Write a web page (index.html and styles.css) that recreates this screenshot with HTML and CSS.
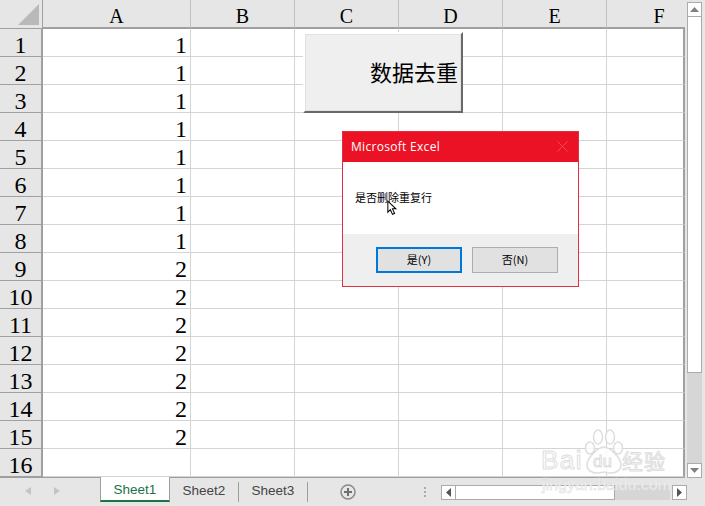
FILE: index.html
```html
<!DOCTYPE html>
<html lang="zh">
<head>
    <meta charset="UTF-8">
    <title>Microsoft Excel</title>
    <link rel="stylesheet" href="styles.css">
</head>
<body>
    <div class="app">
        <div class="top">
            <div class="sheet">
                <div class="colheads">
                    <div class="corner"><svg width="42" height="28"><polygon points="39,4 39,25 18,25" fill="#b9b9b9"/></svg></div>
                    <div class="colhead w-a">A</div>
                    <div class="colhead">B</div>
                    <div class="colhead">C</div>
                    <div class="colhead">D</div>
                    <div class="colhead">E</div>
                    <div class="colhead w-f">F</div>
                </div>
                <div class="row"><div class="rowhead">1</div><div class="cell w-a">1</div><div class="cell"></div><div class="cell"></div><div class="cell"></div><div class="cell"></div><div class="cell w-f"></div></div>
                <div class="row"><div class="rowhead">2</div><div class="cell w-a">1</div><div class="cell"></div><div class="cell"></div><div class="cell"></div><div class="cell"></div><div class="cell w-f"></div></div>
                <div class="row"><div class="rowhead">3</div><div class="cell w-a">1</div><div class="cell"></div><div class="cell"></div><div class="cell"></div><div class="cell"></div><div class="cell w-f"></div></div>
                <div class="row"><div class="rowhead">4</div><div class="cell w-a">1</div><div class="cell"></div><div class="cell"></div><div class="cell"></div><div class="cell"></div><div class="cell w-f"></div></div>
                <div class="row"><div class="rowhead">5</div><div class="cell w-a">1</div><div class="cell"></div><div class="cell"></div><div class="cell"></div><div class="cell"></div><div class="cell w-f"></div></div>
                <div class="row"><div class="rowhead">6</div><div class="cell w-a">1</div><div class="cell"></div><div class="cell"></div><div class="cell"></div><div class="cell"></div><div class="cell w-f"></div></div>
                <div class="row"><div class="rowhead">7</div><div class="cell w-a">1</div><div class="cell"></div><div class="cell"></div><div class="cell"></div><div class="cell"></div><div class="cell w-f"></div></div>
                <div class="row"><div class="rowhead">8</div><div class="cell w-a">1</div><div class="cell"></div><div class="cell"></div><div class="cell"></div><div class="cell"></div><div class="cell w-f"></div></div>
                <div class="row"><div class="rowhead">9</div><div class="cell w-a">2</div><div class="cell"></div><div class="cell"></div><div class="cell"></div><div class="cell"></div><div class="cell w-f"></div></div>
                <div class="row"><div class="rowhead">10</div><div class="cell w-a">2</div><div class="cell"></div><div class="cell"></div><div class="cell"></div><div class="cell"></div><div class="cell w-f"></div></div>
                <div class="row"><div class="rowhead">11</div><div class="cell w-a">2</div><div class="cell"></div><div class="cell"></div><div class="cell"></div><div class="cell"></div><div class="cell w-f"></div></div>
                <div class="row"><div class="rowhead">12</div><div class="cell w-a">2</div><div class="cell"></div><div class="cell"></div><div class="cell"></div><div class="cell"></div><div class="cell w-f"></div></div>
                <div class="row"><div class="rowhead">13</div><div class="cell w-a">2</div><div class="cell"></div><div class="cell"></div><div class="cell"></div><div class="cell"></div><div class="cell w-f"></div></div>
                <div class="row"><div class="rowhead">14</div><div class="cell w-a">2</div><div class="cell"></div><div class="cell"></div><div class="cell"></div><div class="cell"></div><div class="cell w-f"></div></div>
                <div class="row"><div class="rowhead">15</div><div class="cell w-a">2</div><div class="cell"></div><div class="cell"></div><div class="cell"></div><div class="cell"></div><div class="cell w-f"></div></div>
                <div class="row"><div class="rowhead">16</div><div class="cell w-a"></div><div class="cell"></div><div class="cell"></div><div class="cell"></div><div class="cell"></div><div class="cell w-f"></div></div>
            </div>
            <div class="vscroll">
                <div class="sbtn"><svg width="9" height="5"><polygon points="4.5,0 9,5 0,5" fill="#808080"/></svg></div>
                <div class="vthumb"></div>
                <div class="vtrack"></div>
                <div class="sbtn"><svg width="9" height="5"><polygon points="0,0 9,0 4.5,5" fill="#808080"/></svg></div>
            </div>
        </div>
        <div class="tabbar">
            <div class="tabnav">
                <svg width="6" height="8"><polygon points="6,0 6,8 0,4" fill="#c4c4c4"/></svg>
                <svg width="6" height="8"><polygon points="0,0 0,8 6,4" fill="#c4c4c4"/></svg>
            </div>
            <div class="tab active">Sheet1</div>
            <div class="tab">Sheet2</div>
            <div class="tab last">Sheet3</div>
            <svg class="addsheet" width="16" height="16"><circle cx="8" cy="8" r="7" fill="none" stroke="#8a8a8a" stroke-width="1.5"/><path d="M8 4v8M4 8h8" stroke="#6f6f6f" stroke-width="2"/></svg>
            <div class="grip"></div>
            <div class="hscroll">
                <div class="hbtn"><svg width="5" height="9"><polygon points="5,0 5,9 0,4.5" fill="#555"/></svg></div>
                <div class="hthumb"></div>
                <div class="htrack"></div>
                <div class="hbtn"><svg width="5" height="9"><polygon points="0,0 0,9 5,4.5" fill="#555"/></svg></div>
            </div>
        </div>
    </div>

    <div class="macro-btn">数据去重</div>

    <div class="dialog">
        <div class="dialog-title">
            <span>Microsoft Excel</span>
            <svg width="11" height="11"><path d="M.5 .5l10 10M10.500 .5l-10 10" stroke="#f04a58" stroke-width="1"/></svg>
        </div>
        <div class="dialog-body">是否删除重复行</div>
        <div class="dialog-foot">
            <div class="dbtn default">是(Y)</div>
            <div class="dbtn">否(N)</div>
        </div>
    </div>

    <svg class="pointer" width="11" height="16" viewBox="0 0 13 18"><path d="M1 1v13l3-3 2.500 5.500 2.500-1-2.500-5.500h4z" fill="#fff" stroke="#000" stroke-width="1.200"/></svg>

    <div class="watermark">
        <svg width="38" height="46" viewBox="0 0 38 46">
            <g fill="#fff" fill-opacity=".8" stroke="#dedede" stroke-width="1.500">
                <ellipse cx="5" cy="20" rx="4.500" ry="6"/>
                <ellipse cx="13" cy="9" rx="4.500" ry="7"/>
                <ellipse cx="25" cy="9" rx="4.500" ry="7"/>
                <ellipse cx="33" cy="20" rx="4.500" ry="6"/>
                <path d="M19 19c-6 0-17 11-17 18 0 6 6 8 10 8 3 0 5-1 7-1s4 1 7 1c4 0 10-2 10-8 0-7-11-18-17-18z"/>
            </g>
        </svg>
        <span class="wm-bai">Bai</span><span class="wm-du">du</span><span class="wm-jy">经验</span>
        <div class="wm-url">jingyan.baidu.com</div>
    </div>
</body>
</html>
```

FILE: styles.css
```css
html, body {
    margin: 0;
    padding: 0;
}
body {
    width: 705px;
    height: 506px;
    overflow: hidden;
    position: relative;
    background-color: #e6e6e6;
    font-family: "Liberation Serif", "Noto Sans CJK SC", serif;
    color: #000;
}
.app {
    display: flex;
    flex-direction: column;
    height: 506px;
}
.top {
    display: flex;
    height: 478px;
}
.sheet {
    width: 685px;
    height: 478px;
    box-sizing: border-box;
    overflow: hidden;
    background-color: #fff;
    border-bottom: 1px solid #9e9e9e;
}

/* headers */
.colheads, .row {
    display: flex;
}
.colheads {
    height: 29px;
    background-color: #e6e6e6;
}
.corner {
    width: 43px;
    height: 29px;
    box-sizing: border-box;
    border-right: 1px solid #a0a0a0;
    border-bottom: 1px solid #a0a0a0;
}
.corner svg {
    display: block;
}
.colhead {
    width: 104px;
    height: 29px;
    box-sizing: border-box;
    border-right: 1px solid #c0c0c0;
    border-bottom: 2px solid #a0a0a0;
    font-size: 20px;
    line-height: 33px;
    text-align: center;
}
.row {
    height: 28px;
}
.rowhead {
    width: 43px;
    height: 28px;
    box-sizing: border-box;
    background-color: #e6e6e6;
    border-right: 2px solid #a0a0a0;
    border-bottom: 1px solid #a0a0a0;
    font-size: 24px;
    line-height: 33px;
    text-align: center;
}
.cell {
    width: 104px;
    height: 28px;
    box-sizing: border-box;
    border-right: 1px solid #d4d4d4;
    border-bottom: 1px solid #d4d4d4;
    font-size: 24px;
    line-height: 33px;
    text-align: right;
    padding-right: 3px;
}
.w-a {
    width: 148px;
}
.w-f {
    width: 78px;
    border-right: 2px solid #a0a0a0;
}
/* column F is cut off by the scrollbar, its letter stays centred on the full width */
.colhead.w-f {
    border-right: none;
    text-indent: 26px;
}

/* scrollbars */
.vscroll {
    width: 15px;
    margin-left: 2px;
    margin-top: 2px;
    display: flex;
    flex-direction: column;
}
.sbtn {
    height: 15px;
    box-sizing: border-box;
    background-color: #fff;
    border: 1px solid #ababab;
    display: flex;
    align-items: center;
    justify-content: center;
}
.vthumb {
    height: 356px;
    box-sizing: border-box;
    background-color: #fff;
    border: 1px solid #ababab;
    border-top: none;
}
.vtrack {
    flex: 1;
    background-color: #d6d6d6;
}
.tabbar {
    height: 28px;
    display: flex;
    align-items: flex-start;
    font-family: "Liberation Sans", sans-serif;
    font-size: 13.5px;
    color: #444;
}
.tabnav {
    width: 100px;
    height: 26px;
    box-sizing: border-box;
    padding-left: 25px;
    display: flex;
    align-items: center;
    gap: 23px;
}
.tab {
    width: 68px;
    height: 20px;
    margin-top: 4px;
    border-right: 1px solid #9e9e9e;
    line-height: 17px;
    text-align: center;
}
.tab.active {
    width: 70px;
    height: 25px;
    margin-top: -1px;
    box-sizing: border-box;
    background-color: #fff;
    color: #217346;
    border-left: 1px solid #9e9e9e;
    border-right: 1px solid #9e9e9e;
    border-bottom: 2px solid #217346;
    line-height: 25px;
}
.addsheet {
    margin: 6px 0 0 32px;
}
.grip {
    width: 2px;
    height: 10px;
    margin: 9px 0 0 68px;
    border-left: 2px dotted #aaa;
}
.hscroll {
    display: flex;
    margin: 7px 0 0 13px;
    height: 15px;
}
.hbtn {
    width: 15px;
    box-sizing: border-box;
    background-color: #fff;
    border: 1px solid #ababab;
    display: flex;
    align-items: center;
    justify-content: center;
}
.hthumb {
    width: 159px;
    box-sizing: border-box;
    background-color: #fff;
    border: 1px solid #ababab;
    border-left: none;
}
.htrack {
    width: 55px;
    margin-right: 2px;
    background-color: #d6d6d6;
}

/* things lying over the grid */
.macro-btn {
    position: absolute;
    left: 303px;
    top: 32px;
    width: 160px;
    height: 81px;
    box-sizing: border-box;
    background-color: #efefef;
    border: 2px solid #fff;
    border-right-color: #696969;
    border-bottom-color: #696969;
    box-shadow: inset 0 0 0 1px #e2e2e2;
    font-family: "Noto Sans CJK SC", sans-serif;
    font-size: 22px;
    line-height: 75px;
    text-align: right;
    padding-right: 3px;
}
.dialog {
    position: absolute;
    left: 342px;
    top: 131px;
    width: 237px;
    height: 156px;
    box-sizing: border-box;
    background-color: #fff;
    border: 1px solid #e0303f;
    font-family: "Noto Sans CJK SC", sans-serif;
    display: flex;
    flex-direction: column;
}
.dialog-title {
    height: 30px;
    box-sizing: border-box;
    background-color: #ec1225;
    color: #fff;
    font-family: "Open Sans", sans-serif;
    font-size: 12px;
    letter-spacing: .3px;
    display: flex;
    align-items: center;
    justify-content: space-between;
    padding: 0 10px 1px 8px;
}
.dialog-body {
    height: 72px;
    box-sizing: border-box;
    padding: 27px 0 0 12px;
    font-size: 11px;
    line-height: 16px;
}
.dialog-foot {
    flex: 1;
    background-color: #efefef;
    display: flex;
    justify-content: flex-end;
    gap: 10px;
    padding: 13px 20px 0 0;
}
.dbtn {
    width: 86px;
    height: 26px;
    box-sizing: border-box;
    background-color: #e1e1e1;
    border: 1px solid #adadad;
    font-size: 11px;
    line-height: 23px;
    text-align: center;
}
.dbtn.default {
    border: 2px solid #0078d7;
    line-height: 21px;
}
.pointer {
    position: absolute;
    left: 387px;
    top: 200px;
}
.watermark {
    position: absolute;
    left: 541px;
    top: 427px;
    width: 130px;
    color: rgba(255, 255, 255, .8);
    font-family: "Liberation Sans", sans-serif;
    -webkit-text-stroke: 1px #dedede;
}
.watermark svg {
    position: absolute;
    left: 44px;
    top: 1px;
}
.wm-bai, .wm-du, .wm-jy {
    position: absolute;
    top: 19px;
    font-size: 26px;
    line-height: 28px;
    letter-spacing: 1.500px;
}
.wm-bai {
    left: 0;
}
.wm-du {
    left: 52px;
    top: 25px;
    font-size: 17px;
    line-height: 20px;
    letter-spacing: 0;
}
.wm-jy {
    left: 81px;
    top: 19px;
    font-family: "Noto Sans CJK SC", sans-serif;
    font-size: 21px;
    letter-spacing: 1px;
}
.wm-url {
    position: absolute;
    left: 1px;
    top: 49px;
    font-size: 16px;
    line-height: 18px;
    white-space: nowrap;
    -webkit-text-stroke: .6px #dedede;
}
```
